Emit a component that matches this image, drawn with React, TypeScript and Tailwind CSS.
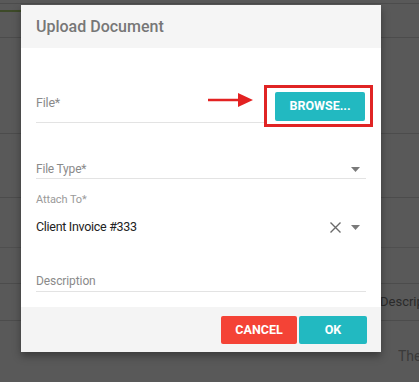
import React from "react";

const Caret = () => (
  <svg width="9" height="5" viewBox="0 0 9 5" className="shrink-0">
    <path d="M0 0 H9 L4.5 5 Z" fill="#7a7a7a" />
  </svg>
);

export default function App() {
  return (
    <div className="relative h-[382px] w-[419px] overflow-hidden bg-[#595959] font-['Roboto','Liberation_Sans',sans-serif]">
      {/* page behind the overlay */}
      <div className="flex flex-col">
        <div className="h-[4px] border-b border-[#4c4c4c]" />
        <div className="h-[34px] border-b border-[#4c4c4c]">
          <div className="mt-[6px] h-[2px] w-[22px] bg-[#3d4a28]" />
        </div>
        <div className="h-[96px] border-b border-[#4c4c4c]" />
        <div className="h-[64px] border-b border-[#4c4c4c]" />
        <div className="h-[50px] border-b border-[#4f4f4f]" />
        <div className="h-[36px] border-b border-[#4c4c4c]" />
        <div className="flex h-[37px] items-center justify-end border-b border-[#4c4c4c] text-[13px] text-[#2a2a2a]">
          <span className="w-[39px] overflow-hidden whitespace-nowrap">Descript</span>
        </div>
        <div className="flex h-[60px] items-center justify-end pt-[10px] text-[14px] text-[#3a3a3a]">
          <span className="w-[21px] overflow-hidden whitespace-nowrap">The</span>
        </div>
      </div>

      {/* modal */}
      <div className="absolute left-[21px] top-[5px] w-[360px] bg-white shadow-[0_4px_8px_rgba(0,0,0,0.35)]">
        <div className="flex h-[43px] items-center bg-[#f5f5f5] px-[15px]">
          <h2 className="text-[16px] font-medium text-[#777777]">Upload Document</h2>
        </div>

        <div className="px-[15px] pt-[37px]">
          <div className="flex items-start border-b border-[#e3e3e3]">
            <span className="flex-1 pt-[10px] text-[12.5px] leading-[15px] tracking-[-0.2px] text-[#8a8a8a]">
              File*
            </span>
            <svg width="46" height="16" viewBox="0 0 46 16" className="mr-[10px] mt-[7px]">
              <path d="M0 8 H32" stroke="#e32222" strokeWidth="2.5" />
              <path d="M30 1 L45 8 L30 15 Z" fill="#e32222" />
            </svg>
            <div className="relative z-10 -mb-[5px] -mr-[7px] border-[3px] border-[#e02424] bg-white pb-[3px] pl-[8px] pr-[5px] pt-[4px]">
              <button
                type="button"
                className="flex h-[29px] w-[90px] items-center justify-center rounded-[2px] bg-[#22b9c1] text-[12.5px] font-bold text-white"
              >
                BROWSE...
              </button>
            </div>
          </div>

          <div className="mt-[39px] flex items-center border-b border-[#e3e3e3] pb-[1px]">
            <span className="flex-1 text-[12px] leading-[15px] tracking-[-0.2px] text-[#8a8a8a]">File Type*</span>
            <div className="mr-[6px]">
              <Caret />
            </div>
          </div>

          <div className="mt-[14px] text-[11px] leading-[14px] tracking-[-0.1px] text-[#9a9a9a]">Attach To*</div>
          <div className="mt-[12px] flex items-center">
            <span className="flex-1 text-[12.5px] leading-[16px] tracking-[-0.3px] text-[#222222]">
              Client Invoice #333
            </span>
            <svg width="11" height="11" viewBox="0 0 11 11" className="mr-[10px]">
              <path d="M0.5 0.5 L10.5 10.5 M10.5 0.5 L0.5 10.5" stroke="#6a6a6a" strokeWidth="1.4" />
            </svg>
            <div className="mr-[6px]">
              <Caret />
            </div>
          </div>

          <div className="mt-[39px] border-b border-[#e3e3e3] pb-[2px] text-[12px] leading-[15px] tracking-[-0.1px] text-[#8a8a8a]">
            Description
          </div>
          <div className="h-[15px]" />
        </div>

        <div className="flex justify-end gap-[2px] bg-[#f4f4f4] pb-[8px] pl-[15px] pr-[14px] pt-[9px]">
          <button
            type="button"
            className="flex h-[28px] w-[76px] items-center justify-center rounded-[2px] bg-[#f44336] text-[12.5px] font-bold text-white"
          >
            CANCEL
          </button>
          <button
            type="button"
            className="flex h-[28px] w-[68px] items-center justify-center rounded-[2px] bg-[#22b9c1] text-[12.5px] font-bold text-white"
          >
            OK
          </button>
        </div>
      </div>
    </div>
  );
}
